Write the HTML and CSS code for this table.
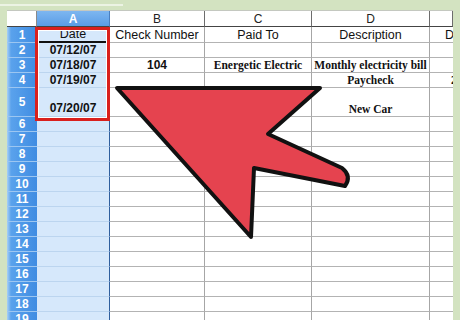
FILE: index.html
```html
<!DOCTYPE html>
<html>
<head>
<meta charset="utf-8">
<link rel="stylesheet" href="styles.css">
</head>
<body>
<div class="strip"></div>
<div class="sheet">
  <div class="row head">
    <div class="corner"></div>
    <div class="hc ha">A</div>
    <div class="hc">B</div>
    <div class="hc">C</div>
    <div class="hc">D</div>
    <div class="hc"></div>
  </div>
  <div class="row r1">
    <div class="num">1</div><div class="c a sans date-h">Date</div><div class="c sans">Check Number</div><div class="c sans">Paid To</div><div class="c sans">Description</div><div class="c e sans">Deposit</div>
  </div>
  <div class="row">
    <div class="num">2</div><div class="c a sans b">07/12/07</div><div class="c"></div><div class="c"></div><div class="c"></div><div class="c e"></div>
  </div>
  <div class="row">
    <div class="num">3</div><div class="c a sans b">07/18/07</div><div class="c sans b">104</div><div class="c serif">Energetic Electric</div><div class="c serif">Monthly electricity bill</div><div class="c e"></div>
  </div>
  <div class="row">
    <div class="num">4</div><div class="c a sans b">07/19/07</div><div class="c"></div><div class="c"></div><div class="c serif">Paycheck</div><div class="c e e2 serif">2000</div>
  </div>
  <div class="row r5">
    <div class="num">5</div><div class="c a sans b">07/20/07</div><div class="c"></div><div class="c"></div><div class="c serif">New Car</div><div class="c e"></div>
  </div>
  <div class="row"><div class="num">6</div><div class="c a"></div><div class="c"></div><div class="c"></div><div class="c"></div><div class="c e"></div></div>
  <div class="row"><div class="num">7</div><div class="c a"></div><div class="c"></div><div class="c"></div><div class="c"></div><div class="c e"></div></div>
  <div class="row"><div class="num">8</div><div class="c a"></div><div class="c"></div><div class="c"></div><div class="c"></div><div class="c e"></div></div>
  <div class="row"><div class="num">9</div><div class="c a"></div><div class="c"></div><div class="c"></div><div class="c"></div><div class="c e"></div></div>
  <div class="row"><div class="num">10</div><div class="c a"></div><div class="c"></div><div class="c"></div><div class="c"></div><div class="c e"></div></div>
  <div class="row"><div class="num">11</div><div class="c a"></div><div class="c"></div><div class="c"></div><div class="c"></div><div class="c e"></div></div>
  <div class="row"><div class="num">12</div><div class="c a"></div><div class="c"></div><div class="c"></div><div class="c"></div><div class="c e"></div></div>
  <div class="row"><div class="num">13</div><div class="c a"></div><div class="c"></div><div class="c"></div><div class="c"></div><div class="c e"></div></div>
  <div class="row"><div class="num">14</div><div class="c a"></div><div class="c"></div><div class="c"></div><div class="c"></div><div class="c e"></div></div>
  <div class="row"><div class="num">15</div><div class="c a"></div><div class="c"></div><div class="c"></div><div class="c"></div><div class="c e"></div></div>
  <div class="row"><div class="num">16</div><div class="c a"></div><div class="c"></div><div class="c"></div><div class="c"></div><div class="c e"></div></div>
  <div class="row"><div class="num">17</div><div class="c a"></div><div class="c"></div><div class="c"></div><div class="c"></div><div class="c e"></div></div>
  <div class="row"><div class="num">18</div><div class="c a"></div><div class="c"></div><div class="c"></div><div class="c"></div><div class="c e"></div></div>
  <div class="row"><div class="num">19</div><div class="c a"></div><div class="c"></div><div class="c"></div><div class="c"></div><div class="c e"></div></div>
  <div class="redbox"></div>
</div>
<svg class="arrow" width="460" height="320" viewBox="0 0 460 320">
  <path d="M117 88 L320 88 L268 134 L342 168 Q352 176 345 186 L254 168 L251 237 Z" fill="#e5434f" stroke="#111" stroke-width="4" stroke-linejoin="round"/>
</svg>
</body>
</html>
```
FILE: styles.css
```css
html, body {
  margin: 0;
  padding: 0;
}
body {
  width: 460px;
  height: 320px;
  overflow: hidden;
  background: #d3e3c1;
  position: relative;
}
.strip {
  width: 123px;
  height: 2px;
  margin-top: 4px;
  background: #ecf3e4;
}
.sheet {
  position: relative;
  margin: 4px 0 0 7px;
  width: 446px;
  height: 310px;
  overflow: hidden;
  background: #fff;
  border-top: 1px solid #c4c8c0;
  box-sizing: border-box;
}
.row {
  display: grid;
  grid-template-columns: 30px 73px 95px 107px 118px 23px;
  height: 15px;
}
.row.head { height: 16px; }
.row.r1 { height: 16px; }
.row.r5 { height: 29px; }
.row > div {
  box-sizing: border-box;
  display: flex;
  align-items: center;
  justify-content: center;
  white-space: nowrap;
  overflow: hidden;
  min-width: 0;
}
.corner {
  background: #fff;
  border-right: 1px solid #8a8a8a;
  border-bottom: 1px solid #444;
}
.hc {
  font-family: "Liberation Sans", Arial, sans-serif;
  font-size: 12px;
  color: #222;
  background: #fff;
  border-right: 1px solid #6d6d6d;
  border-bottom: 1px solid #444;
}
.hc.ha {
  background: linear-gradient(#7db6f0, #5a9de6);
  color: #fff;
  font-weight: bold;
  border-right: 1px solid #4a7fc0;
}
.num {
  background: linear-gradient(to right, #a9d0f6 0, #5aa2ec 4px, #3f8ce2 100%);
  border-bottom: 1px solid #9cc6f1;
  color: #fff;
  font-family: "Liberation Sans", Arial, sans-serif;
  font-weight: bold;
  font-size: 12px;
}
.c {
  border-right: 1px solid #a6a6a6;
  border-bottom: 1px solid #b3b3b3;
  color: #111;
}
.row > .c.e {
  justify-content: flex-start;
  padding-left: 15px;
  border-right: none;
}
.row > .c.e.e2 {
  padding-left: 21px;
}
.c.a {
  background: #d6e8fb;
  border-right: 1px solid #2f5f9e;
  border-bottom: 1px solid #bcd5ef;
}
.c.a.date-h {
  border-bottom: 2px solid #111;
}
.r5 > .c {
  align-items: flex-end;
  padding-bottom: 1px;
}
.sans {
  font-family: "Liberation Sans", Arial, sans-serif;
  font-size: 12.5px;
}
.sans.b {
  font-size: 12px;
  font-weight: bold;
}
.serif {
  font-family: "Liberation Serif", "Times New Roman", serif;
  font-weight: bold;
  font-size: 11.5px;
}
.redbox {
  position: absolute;
  left: 28px;
  top: 16px;
  width: 75px;
  height: 94px;
  box-sizing: border-box;
  border: 3px solid #d9201d;
  box-shadow: inset 0 0 0 1px #fff;
}
.arrow {
  position: absolute;
  left: 0;
  top: 0;
}
```
